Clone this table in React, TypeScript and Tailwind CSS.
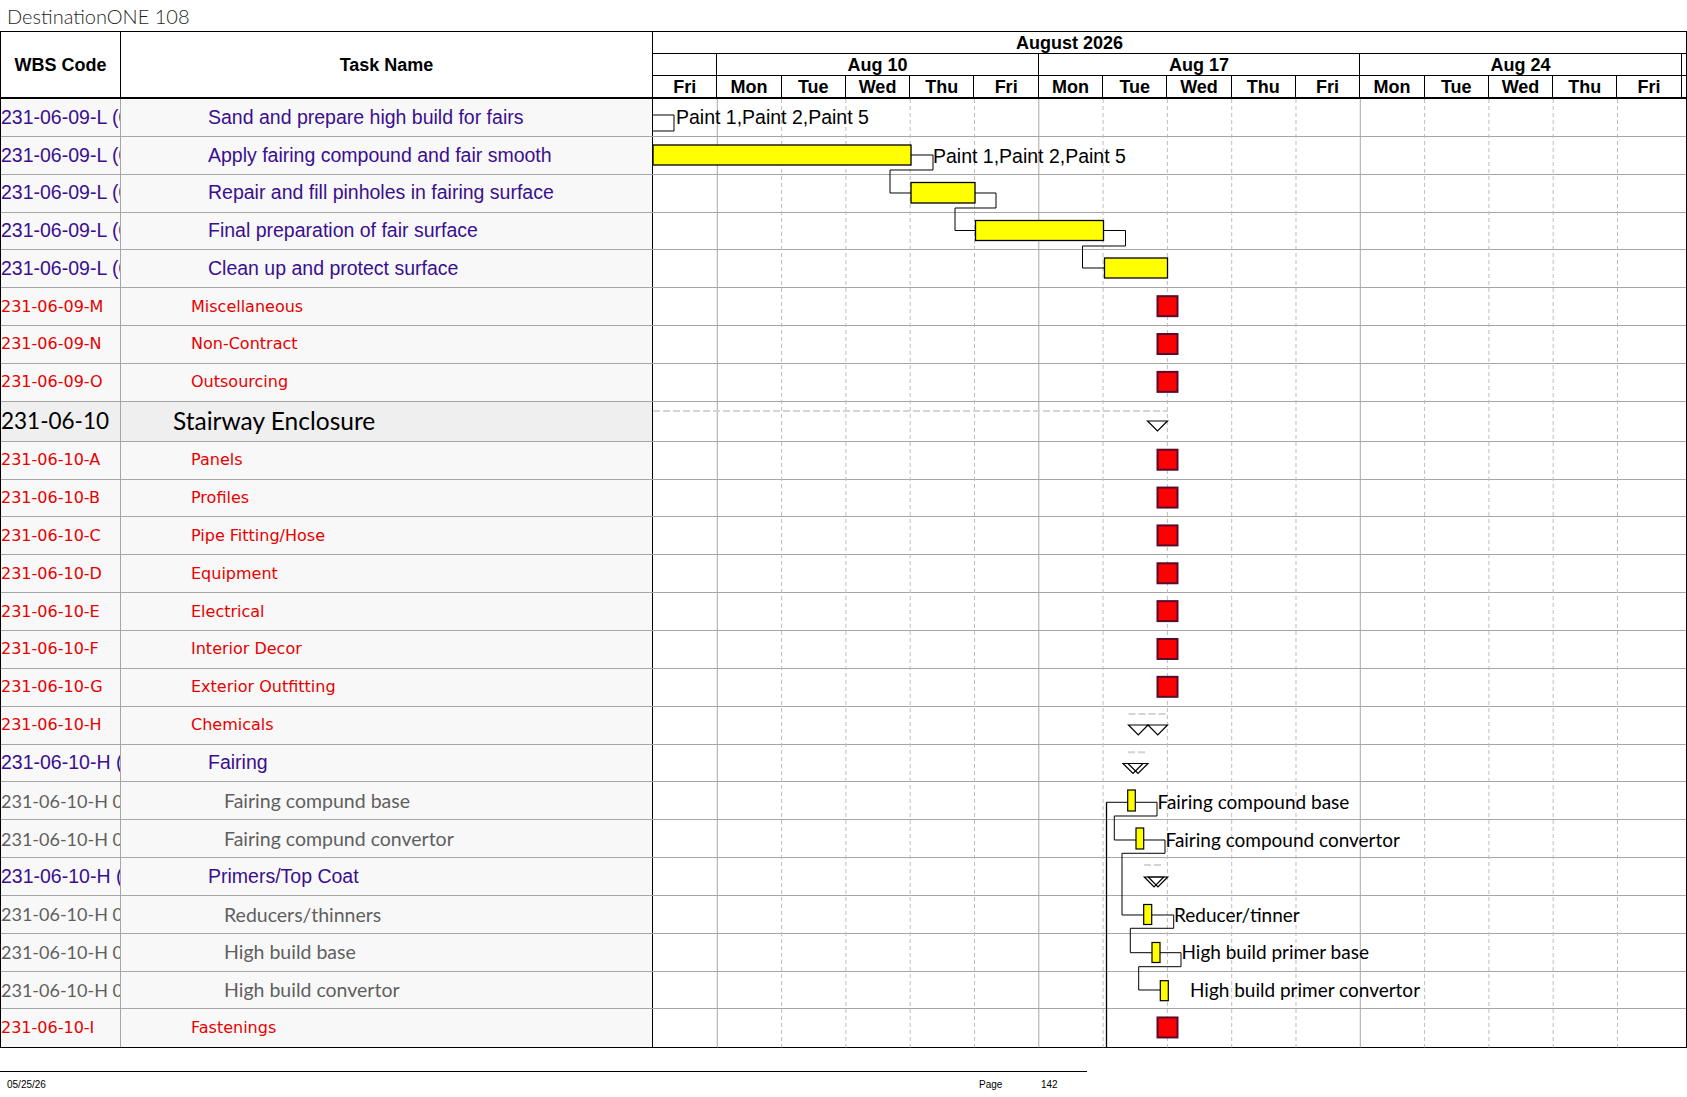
import React from 'react';

type Kind = 'purple' | 'red' | 'stair' | 'gray';

const rows: { wbs: string; name: string; kind: Kind }[] = [
  { wbs: '231-06-09-L (01)', name: 'Sand and prepare high build for fairs', kind: 'purple' },
  { wbs: '231-06-09-L (02)', name: 'Apply fairing compound and fair smooth', kind: 'purple' },
  { wbs: '231-06-09-L (03)', name: 'Repair and fill pinholes in fairing surface', kind: 'purple' },
  { wbs: '231-06-09-L (04)', name: 'Final preparation of fair surface', kind: 'purple' },
  { wbs: '231-06-09-L (05)', name: 'Clean up and protect surface', kind: 'purple' },
  { wbs: '231-06-09-M', name: 'Miscellaneous', kind: 'red' },
  { wbs: '231-06-09-N', name: 'Non-Contract', kind: 'red' },
  { wbs: '231-06-09-O', name: 'Outsourcing', kind: 'red' },
  { wbs: '231-06-10', name: 'Stairway Enclosure', kind: 'stair' },
  { wbs: '231-06-10-A', name: 'Panels', kind: 'red' },
  { wbs: '231-06-10-B', name: 'Profiles', kind: 'red' },
  { wbs: '231-06-10-C', name: 'Pipe Fitting/Hose', kind: 'red' },
  { wbs: '231-06-10-D', name: 'Equipment', kind: 'red' },
  { wbs: '231-06-10-E', name: 'Electrical', kind: 'red' },
  { wbs: '231-06-10-F', name: 'Interior Decor', kind: 'red' },
  { wbs: '231-06-10-G', name: 'Exterior Outfitting', kind: 'red' },
  { wbs: '231-06-10-H', name: 'Chemicals', kind: 'red' },
  { wbs: '231-06-10-H (01)', name: 'Fairing', kind: 'purple' },
  { wbs: '231-06-10-H 01.01', name: 'Fairing compund base', kind: 'gray' },
  { wbs: '231-06-10-H 01.02', name: 'Fairing compund convertor', kind: 'gray' },
  { wbs: '231-06-10-H (02)', name: 'Primers/Top Coat', kind: 'purple' },
  { wbs: '231-06-10-H 02.01', name: 'Reducers/thinners', kind: 'gray' },
  { wbs: '231-06-10-H 02.02', name: 'High build base', kind: 'gray' },
  { wbs: '231-06-10-H 02.03', name: 'High build convertor', kind: 'gray' },
  { wbs: '231-06-10-I', name: 'Fastenings', kind: 'red' },
];

const wbsCls: Record<Kind, string> = {
  purple: "font-['Liberation_Sans',Arial,sans-serif] text-[19.5px] text-[#3a0f8f]",
  red: "font-['DejaVu_Sans',Verdana,sans-serif] text-[16px] text-[#e60000]",
  stair: "font-['Lato',sans-serif] text-[22.5px] text-black",
  gray: "font-['Lato',sans-serif] text-[18px] text-[#5f5f5f]",
};

const nameCls: Record<Kind, string> = {
  purple: "font-['Liberation_Sans',Arial,sans-serif] text-[19.5px] text-[#3a0f8f] pl-[87px]",
  red: "font-['DejaVu_Sans',Verdana,sans-serif] text-[16px] text-[#e60000] pl-[70px]",
  stair: "font-['Lato',sans-serif] text-[24.5px] text-black pl-[52px]",
  gray: "font-['Lato',sans-serif] text-[19.5px] text-[#5f5f5f] pl-[103px]",
};

const days = ['Fri', 'Mon', 'Tue', 'Wed', 'Thu', 'Fri', 'Mon', 'Tue', 'Wed', 'Thu', 'Fri', 'Mon', 'Tue', 'Wed', 'Thu', 'Fri'];
const weeks = ['Aug 10', 'Aug 17', 'Aug 24'];

const DAY = 64.3;
const X0 = 652;
const BODY_TOP = 99;
const BODY_H = 24 * 37.85 + 40;

const ARIAL = "'Liberation Sans', Arial, sans-serif";
const CAL = "Lato, 'Open Sans', sans-serif";

function GanttDrawing() {
  const grid: React.ReactNode[] = [];
  for (let d = 1; d < 16; d++) {
    const x = X0 + d * DAY;
    const solid = d === 1 || d === 6 || d === 11;
    grid.push(
      <line
        key={d}
        x1={x}
        x2={x}
        y1={BODY_TOP}
        y2={BODY_TOP + BODY_H}
        stroke={solid ? '#a8a8a8' : '#bdbdbd'}
        strokeWidth={1}
        strokeDasharray={solid ? undefined : '4 3'}
      />
    );
  }
  const redRows = [5, 6, 7, 9, 10, 11, 12, 13, 14, 15, 24];
  const rowTop = (i: number) => (i <= 8 ? BODY_TOP + i * 37.85 : BODY_TOP + 8 * 37.85 + 40 + (i - 9) * 37.85);
  const rowH = (i: number) => (i === 8 ? 40 : 37.85);
  const link = 'black';
  const tri = (x: number, y: number, w = 20, h = 10) => `${x},${y} ${x + w},${y} ${x + w / 2},${y + h}`;
  return (
    <svg
      className="absolute left-[653px] top-0 w-[1033px] h-[948.4px] overflow-visible"
      viewBox={`653 99 1033 ${BODY_H}`}
    >
      {grid}
      {/* task bars and links */}
      <polyline points="652,115 673,115 673,131 652,131" fill="none" stroke={link} strokeWidth={1} />
      <text x={675} y={124} fontFamily={ARIAL} fontSize={19.5} fill="#000">Paint 1,Paint 2,Paint 5</text>

      <rect x={652} y={145} width={258} height={20} fill="#ffff00" stroke="#000" strokeWidth={1.3} />
      <polyline points="910,155 932,155 932,170 889,170 889,193 910,193" fill="none" stroke={link} strokeWidth={1} />
      <text x={932} y={163.5} fontFamily={ARIAL} fontSize={19.5} fill="#000">Paint 1,Paint 2,Paint 5</text>

      <rect x={910} y={182.5} width={64} height={20.5} fill="#ffff00" stroke="#000" strokeWidth={1.3} />
      <polyline points="974,193 995,193 995,208 954,208 954,230.5 974.5,230.5" fill="none" stroke={link} strokeWidth={1} />

      <rect x={974.5} y={220.5} width={128} height={20} fill="#ffff00" stroke="#000" strokeWidth={1.3} />
      <polyline points="1102.5,230.5 1124.5,230.5 1124.5,246 1081.5,246 1081.5,268 1103.5,268" fill="none" stroke={link} strokeWidth={1} />

      <rect x={1103.5} y={258} width={63} height={20} fill="#ffff00" stroke="#000" strokeWidth={1.3} />

      {/* milestones */}
      {redRows.map((i) => {
        const c = rowTop(i) + rowH(i) / 2 - 1;
        return (
          <rect key={i} x={1156.5} y={c - 10} width={20} height={20} fill="#ff0000" stroke="#5a0a2a" strokeWidth={2} />
        );
      })}

      {/* Stairway summary */}
      <line x1={652} x2={1167} y1={411} y2={411} stroke="#d4d4d4" strokeWidth={2} strokeDasharray="7 3" />
      <polygon points={tri(1146.5, 421)} fill="#fff" stroke="#000" strokeWidth={1.2} />

      {/* Chemicals summary */}
      <line x1={1127.5} x2={1166} y1={714} y2={714} stroke="#d4d4d4" strokeWidth={2} strokeDasharray="7 3" />
      <polygon points={tri(1127.5, 725, 19.5)} fill="#fff" stroke="#000" strokeWidth={1.2} />
      <polygon points={tri(1147, 725, 19.5)} fill="#fff" stroke="#000" strokeWidth={1.2} />

      {/* Fairing summary */}
      <line x1={1127} x2={1144} y1={752.3} y2={752.3} stroke="#d4d4d4" strokeWidth={2} strokeDasharray="7 3" />
      <polygon points={tri(1122, 763.5)} fill="#fff" stroke="#000" strokeWidth={1.2} />
      <polygon points={tri(1127, 763.5)} fill="none" stroke="#000" strokeWidth={1.2} />

      {/* Fairing compound base */}
      <line x1={1105.5} x2={1105.5} y1={802.3} y2={1047} stroke="#000" strokeWidth={1.3} />
      <line x1={1105.5} x2={1126.7} y1={802.3} y2={802.3} stroke="#000" strokeWidth={1} />
      <rect x={1126.7} y={790} width={7.6} height={21} fill="#ffff00" stroke="#000" strokeWidth={1.2} />
      <polyline points="1134.3,802.3 1156,802.3 1156,816 1113.3,816 1113.3,840 1135,840" fill="none" stroke={link} strokeWidth={1} />
      <text x={1156.5} y={809} fontFamily={CAL} fontSize={19} fill="#000">Fairing compound base</text>

      {/* Fairing compound convertor */}
      <rect x={1135} y={828} width={7.7} height={21} fill="#ffff00" stroke="#000" strokeWidth={1.2} />
      <polyline points="1142.7,840 1164,840 1164,853.3 1121,853.3 1121,915 1142.7,915" fill="none" stroke={link} strokeWidth={1} />
      <text x={1164.5} y={847} fontFamily={CAL} fontSize={19} fill="#000">Fairing compound convertor</text>

      {/* Primers summary */}
      <line x1={1143} x2={1162} y1={865} y2={865} stroke="#d4d4d4" strokeWidth={2} strokeDasharray="7 3" />
      <polygon points={tri(1143.3, 877, 19.5)} fill="#fff" stroke="#000" strokeWidth={1.2} />
      <polygon points={tri(1147.2, 877, 19.5)} fill="none" stroke="#000" strokeWidth={1.2} />

      {/* Reducer */}
      <rect x={1142.7} y={904.5} width={8} height={20} fill="#ffff00" stroke="#000" strokeWidth={1.2} />
      <polyline points="1150.7,915 1172.7,915 1172.7,928.3 1129.3,928.3 1129.3,952.7 1151,952.7" fill="none" stroke={link} strokeWidth={1} />
      <text x={1173} y={922} fontFamily={CAL} fontSize={19} fill="#000">Reducer/tinner</text>

      {/* High build primer base */}
      <rect x={1151} y={942.5} width={8} height={20} fill="#ffff00" stroke="#000" strokeWidth={1.2} />
      <polyline points="1159,952.7 1180,952.7 1180,966.7 1137.7,966.7 1137.7,990 1159.3,990" fill="none" stroke={link} strokeWidth={1} />
      <text x={1180.5} y={959.5} fontFamily={CAL} fontSize={19} fill="#000">High build primer base</text>

      {/* High build primer convertor */}
      <rect x={1159.3} y={980.7} width={8} height={20} fill="#ffff00" stroke="#000" strokeWidth={1.2} />
      <text x={1189} y={997.5} fontFamily={CAL} fontSize={19} fill="#000">High build primer convertor</text>
    </svg>
  );
}

export default function App() {
  return (
    <div className="w-[1687px] h-[1097px] bg-white overflow-hidden text-black">
      <div className="h-[31px] pl-[7px] flex items-center font-['Lato',sans-serif] font-light text-[20px] text-[#1f1f1f] leading-none">
        DestinationONE 108
      </div>
      <div className="w-[1687px] border border-black flex flex-col">
        {/* Header */}
        <div className="h-[67px] border-b-2 border-black flex font-['Liberation_Sans',Arial,sans-serif] font-bold text-[18px] leading-none">
          <div className="w-[120px] shrink-0 border-r border-black flex items-center justify-center">WBS Code</div>
          <div className="w-[532px] shrink-0 border-r border-black flex items-center justify-center">Task Name</div>
          <div className="flex-1 flex flex-col">
            <div className="h-[22px] border-b border-black flex items-center pl-[363px]">August 2026</div>
            <div className="h-[22px] border-b border-black flex">
              <div className="w-[64.3px] shrink-0 border-r border-black" />
              {weeks.map((w) => (
                <div key={w} className="w-[321.5px] shrink-0 border-r border-black flex items-center justify-center">
                  {w}
                </div>
              ))}
            </div>
            <div className="flex-1 flex">
              {days.map((d, i) => (
                <div key={i} className="w-[64.3px] shrink-0 border-r border-black flex items-center justify-center">
                  {d}
                </div>
              ))}
            </div>
          </div>
        </div>
        {/* Body */}
        <div className="relative flex flex-col">
          {rows.map((r, i) => {
            const last = i === rows.length - 1;
            const stair = r.kind === 'stair';
            return (
              <div
                key={i}
                className={`flex ${stair ? 'h-[40px]' : 'h-[37.85px]'} ${last ? '' : 'border-b border-[#a6a6a6]'}`}
              >
                <div
                  className={`w-[120px] shrink-0 border-r border-[#a6a6a6] flex items-center overflow-hidden whitespace-nowrap leading-none ${
                    stair ? 'bg-[#efefef]' : 'bg-[#f8f8f8]'
                  } ${wbsCls[r.kind]}`}
                >
                  {r.wbs}
                </div>
                <div
                  className={`w-[532px] shrink-0 border-r border-black flex items-center overflow-hidden whitespace-nowrap leading-none ${
                    stair ? 'bg-[#efefef]' : 'bg-[#f8f8f8]'
                  } ${nameCls[r.kind]}`}
                >
                  {r.name}
                </div>
                <div className="flex-1 bg-white" />
              </div>
            );
          })}
          <GanttDrawing />
        </div>
      </div>
      {/* Footer */}
      <div className="mt-[23px] w-[1087px] border-t border-black" />
      <div className="h-[26px] flex items-center pl-[7px] font-['Liberation_Sans_Narrow','Liberation_Sans',Arial,sans-serif] text-[10px] text-black leading-none">
        <div className="w-[972px]">05/25/26</div>
        <div className="w-[62px]">Page</div>
        <div>142</div>
      </div>
    </div>
  );
}
